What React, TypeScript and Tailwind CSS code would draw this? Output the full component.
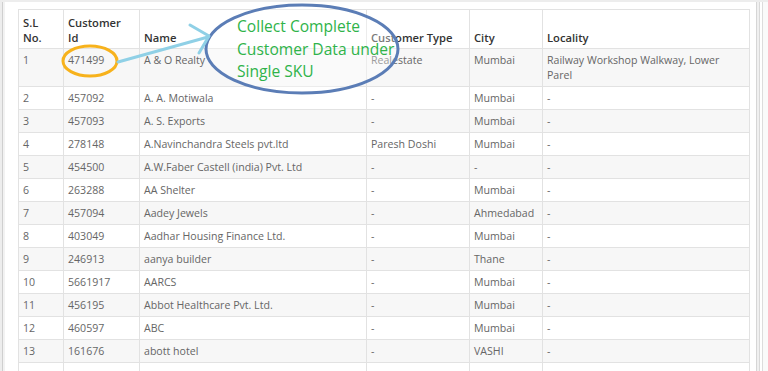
import React from 'react';

type Row = [string, string, string, string, string, string];

const rows: Row[] = [
  ['1', '471499', 'A & O Realty', 'Realestate', 'Mumbai', 'Railway Workshop Walkway, Lower Parel'],
  ['2', '457092', 'A. A. Motiwala', '-', 'Mumbai', '-'],
  ['3', '457093', 'A. S. Exports', '-', 'Mumbai', '-'],
  ['4', '278148', 'A.Navinchandra Steels pvt.ltd', 'Paresh Doshi', 'Mumbai', '-'],
  ['5', '454500', 'A.W.Faber Castell (india) Pvt. Ltd', '-', '-', '-'],
  ['6', '263288', 'AA Shelter', '-', 'Mumbai', '-'],
  ['7', '457094', 'Aadey Jewels', '-', 'Ahmedabad', '-'],
  ['8', '403049', 'Aadhar Housing Finance Ltd.', '-', 'Mumbai', '-'],
  ['9', '246913', 'aanya builder', '-', 'Thane', '-'],
  ['10', '5661917', 'AARCS', '-', 'Mumbai', '-'],
  ['11', '456195', 'Abbot Healthcare Pvt. Ltd.', '-', 'Mumbai', '-'],
  ['12', '460597', 'ABC', '-', 'Mumbai', '-'],
  ['13', '161676', 'abott hotel', '-', 'VASHI', '-'],
  ['', '', '', '', '', ''],
];

const headers = [['S.L', 'No.'], ['Customer', 'Id'], ['Name'], ['Customer Type'], ['City'], ['Locality']];

export default function App() {
  return (
    <div className="relative flex h-[371px] w-[768px] overflow-hidden bg-[#ededed] pl-[2px] pt-[2px] font-['Open_Sans',sans-serif]">
      <div className="flex flex-1 border-l border-[#cfcfcf] bg-[#f2f2f2] pl-[2px]">
        {/* panel */}
        <div className="w-[752px] shrink-0 border-r border-[#d6d6d6] bg-white pl-[13px] pt-[7px]">
          <table className="w-[731px] table-fixed border-collapse border border-[#e2e2e2] text-[10.6px] leading-[15px]">
            <colgroup>
              <col className="w-[45px]" />
              <col className="w-[76px]" />
              <col className="w-[227px]" />
              <col className="w-[103px]" />
              <col className="w-[73px]" />
              <col className="w-[207px]" />
            </colgroup>
            <thead>
              <tr className="h-[39px]">
                {headers.map((h, i) => (
                  <th
                    key={i}
                    className="border border-[#e2e2e2] px-[4px] pb-[3px] pt-[4px] text-left align-bottom text-[11.2px] font-semibold text-[#333]"
                  >
                    {h.map((l, j) => (
                      <div key={j}>{l}</div>
                    ))}
                  </th>
                ))}
              </tr>
            </thead>
            <tbody>
              {rows.map((r, i) => (
                <tr key={i} className={i % 2 === 0 ? 'bg-[#f7f7f7]' : 'bg-white'}>
                  {r.map((c, j) => (
                    <td
                      key={j}
                      className="h-[23px] border border-[#e2e2e2] px-[4px] pb-[3px] pt-[4px] align-top text-[#666]"
                    >
                      {c}
                    </td>
                  ))}
                </tr>
              ))}
            </tbody>
          </table>
        </div>
        {/* scroll edge */}
        <div className="flex flex-1 bg-white">
          <div className="w-[3px] border-r border-[#d9d9d9] bg-[#f0f0f0]" />
          <div className="w-[3px] border-r border-[#dcdcdc] bg-white" />
          <div className="flex-1 bg-[#fafafa]" />
        </div>
      </div>

      {/* annotation overlay */}
      <svg className="pointer-events-none absolute left-0 top-0" width="768" height="371" viewBox="0 0 768 371">
        <ellipse cx="302" cy="49" rx="96" ry="44" fill="white" fillOpacity="0.35" stroke="#5b7db6" strokeWidth="3" />
        <ellipse cx="90" cy="61" rx="27" ry="15" fill="none" stroke="#f7b21c" strokeWidth="3" />
        <path d="M118 62 L208 37" stroke="#8fd0e6" strokeWidth="3" fill="none" strokeLinecap="round" />
        <path d="M190 25 L209 36 L199 53" stroke="#8fd0e6" strokeWidth="3" fill="none" strokeLinecap="round" strokeLinejoin="round" />
      </svg>
      <div className="pointer-events-none absolute left-[237px] top-[15px] text-[15.6px] leading-[22.5px] text-[#2fb34a]">
        <div>Collect Complete</div>
        <div>Customer Data under</div>
        <div>Single SKU</div>
      </div>
    </div>
  );
}
